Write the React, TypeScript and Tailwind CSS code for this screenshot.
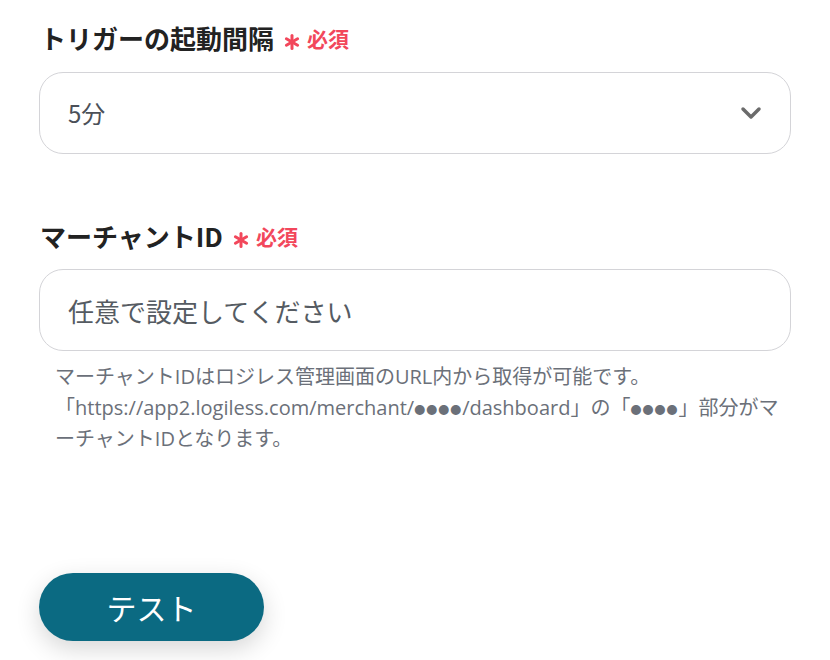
import React from 'react';

const font = { fontFamily: '"Noto Sans CJK JP", "Noto Sans", sans-serif' };
const helpFont = { fontFamily: '"Open Sans", "Noto Sans CJK JP", sans-serif' };

const Label: React.FC<{ text: string }> = ({ text }) => (
  <div className="flex h-[34px] items-center pl-[1px]">
    <span className="text-[26px] font-bold leading-none text-[#222222]">{text}</span>
    <svg className="ml-[10px] mt-[8px]" width="16" height="16" viewBox="0 0 16 16">
      <g stroke="#f2475b" strokeWidth="3" strokeLinecap="round">
        <path d="M8 1.5v13" />
        <path d="M2.4 4.75l11.2 6.5" />
        <path d="M2.4 11.25l11.2-6.5" />
      </g>
    </svg>
    <span className="ml-[7px] text-[21px] font-bold leading-none text-[#f2475b]">必須</span>
  </div>
);

const Dots = () => (
  <span className="align-[1px] text-[11px] leading-none tracking-[1px]" style={font}>●●●●</span>
);

export default function App() {
  return (
    <div className="min-h-screen w-[830px] bg-white px-[39px] pt-[21px]" style={font}>
      <Label text="トリガーの起動間隔" />
      <div className="mt-[17px] flex h-[82px] items-center justify-between rounded-[24px] border border-[#d4d4d8] pl-[28px] pr-[28px]">
        <span className="text-[24px] text-[#4b5058]">5分</span>
        <svg width="22" height="14" viewBox="0 0 22 14" fill="none">
          <path d="M3 3l8 8 8-8" stroke="#6b6b6b" strokeWidth="3.5" strokeLinecap="round" strokeLinejoin="round" />
        </svg>
      </div>

      <div className="mt-[65px]">
        <Label text="マーチャントID" />
      </div>
      <div className="mt-[16px] flex h-[82px] items-center rounded-[24px] border border-[#d4d4d8] pl-[28px]">
        <span className="text-[26px] text-[#555b62]">任意で設定してください</span>
      </div>
      <p className="mt-[10px] pl-[16px] text-[20px] leading-[31px] text-[#6b7079]" style={helpFont}>
        マーチャントIDはロジレス管理画面のURL内から取得が可能です。<br />
        「https://app2.logiless.com/merchant/<Dots />/dashboard」の「<Dots />」部分がマ<br />
        ーチャントIDとなります。
      </p>

      <button className="mt-[119px] flex h-[68px] w-[225px] items-center justify-center rounded-full bg-[#0b6a82] text-[30px] text-white shadow-[0_8px_24px_rgba(0,0,0,0.16)]">
        テスト
      </button>
    </div>
  );
}
